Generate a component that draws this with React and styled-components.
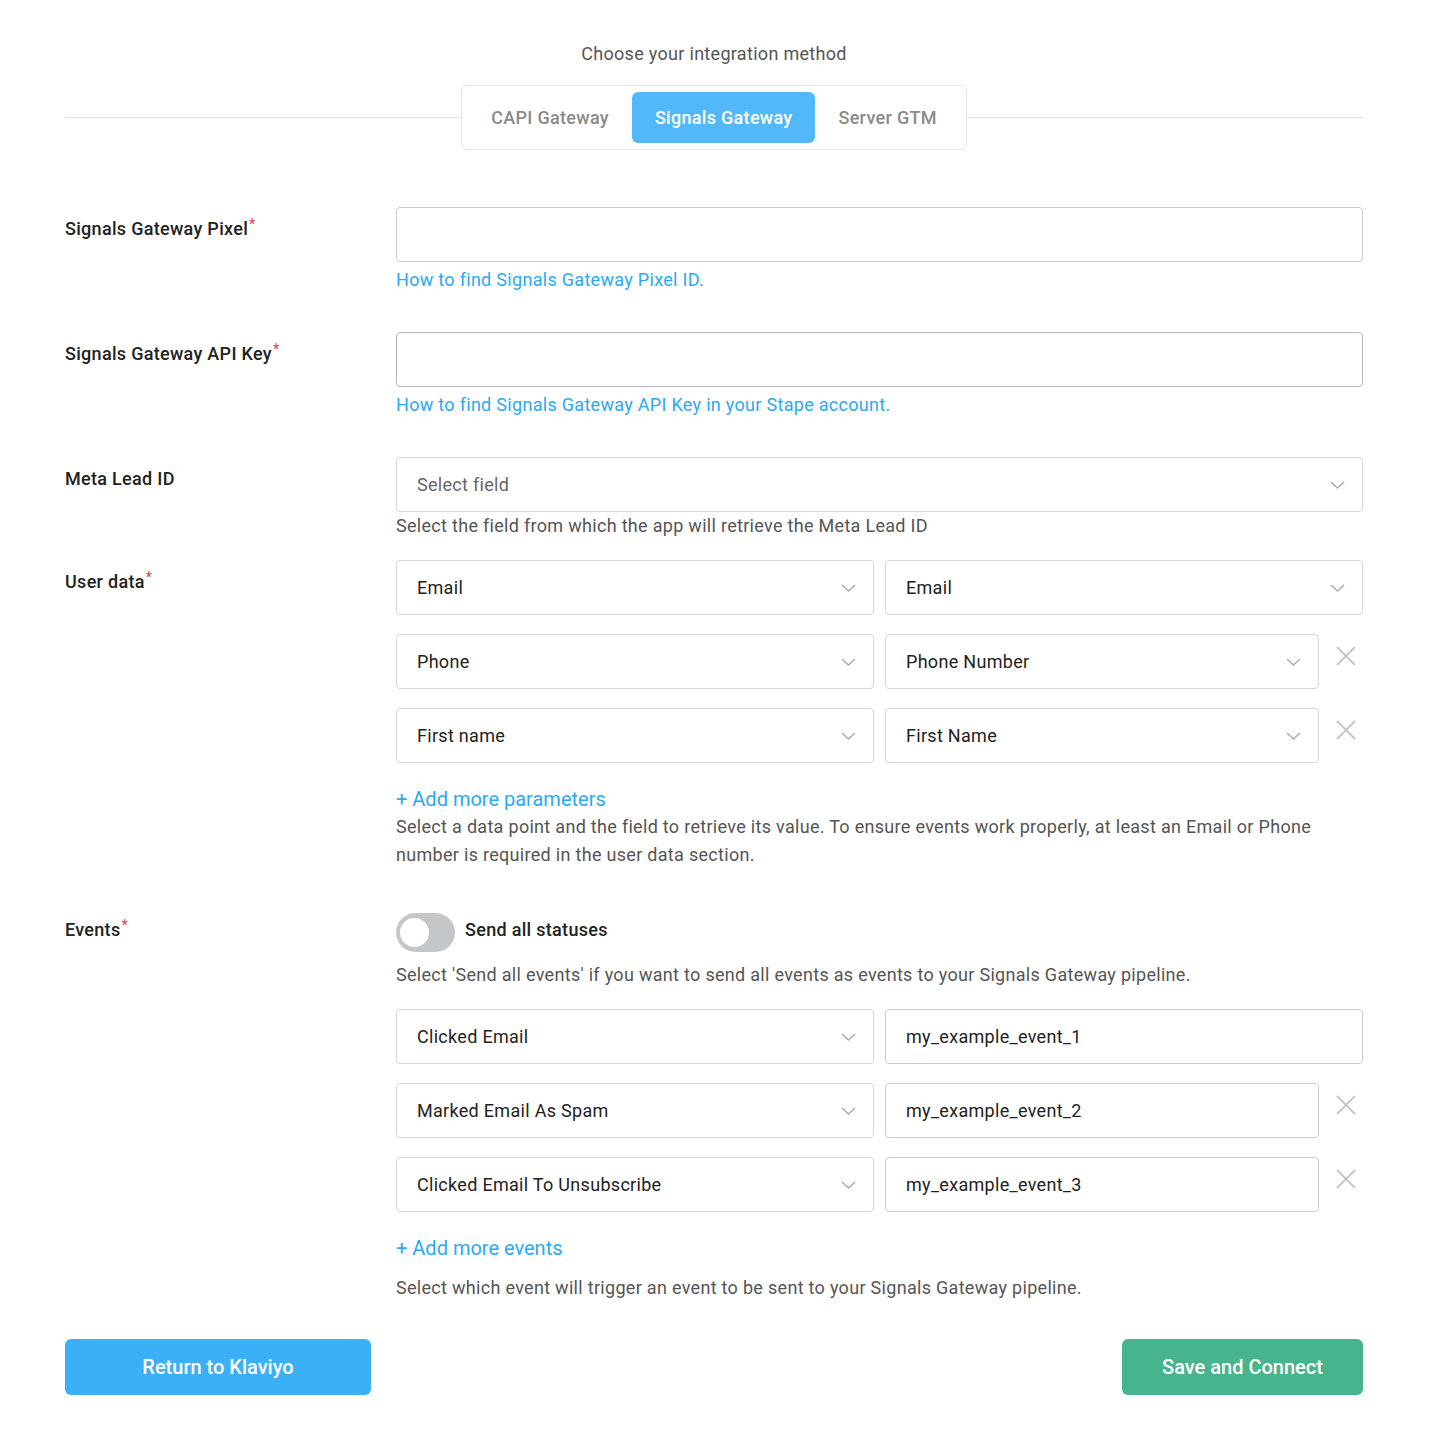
import styled, { createGlobalStyle } from "styled-components";

const GlobalStyle = createGlobalStyle`
  body {
    margin: 0;
    background: #fff;
    font-family: Roboto, "Liberation Sans", Arial, sans-serif;
    color: #222;
    letter-spacing: 0.3px;
  }
  * { box-sizing: border-box; }
`;

const Page = styled.div`
  padding: 41px 77px 37px 65px;
  width: 1440px;
`;

const Title = styled.div`
  text-align: center;
  font-size: 18px;
  line-height: 26px;
  color: #555;
`;

const TabsLine = styled.div`
  display: flex;
  align-items: center;
  margin-top: 18px;

  &::before,
  &::after {
    content: "";
    flex: 1;
    height: 1px;
    background: #e3e3e3;
  }
`;

const Tabs = styled.div`
  display: flex;
  padding: 6px;
  border: 1px solid #e6e6e6;
  border-radius: 6px;
  background: #fff;
`;

const Tab = styled.button`
  border: 0;
  height: 51px;
  padding: 0 23px;
  border-radius: 6px;
  font-family: inherit;
  letter-spacing: inherit;
  font-size: 18px;
  font-weight: 500;
  cursor: pointer;
  background: ${({ $active }) => ($active ? "#52b8f8" : "transparent")};
  color: ${({ $active }) => ($active ? "#fff" : "#8a8a8a")};
`;

const Form = styled.div`
  margin-top: 57px;
`;

const Row = styled.div`
  display: grid;
  grid-template-columns: 331px 1fr;
  margin-bottom: ${({ $mb }) => $mb}px;
`;

const Label = styled.div`
  font-size: 18px;
  font-weight: 500;
  line-height: 24px;
  color: #222;
  padding-top: ${({ $pt }) => $pt ?? 9}px;

  sup {
    color: #e5475a;
    font-size: 14px;
    line-height: 0;
    vertical-align: 6px;
    margin-left: 1px;
  }
`;

const Field = styled.div`
  display: flex;
  flex-direction: column;
`;

const Input = styled.div`
  height: 55px;
  border: 1px solid ${({ $dark }) => ($dark ? "#b8b8b8" : "#ccc")};
  border-radius: 4px;
  display: flex;
  align-items: center;
  padding: 0 20px;
  font-size: 18px;
  color: #222;
  background: #fff;
  min-width: 0;
`;

const SelectBox = styled(Input)`
  border-color: #d6d6d6;
  justify-content: space-between;
  color: ${({ $placeholder }) => ($placeholder ? "#666" : "#222")};
  padding-right: 17px;
`;

const HelpLink = styled.a`
  font-size: 18px;
  line-height: 26px;
  margin-top: 5px;
  color: #2aa9f4;
  text-decoration: none;
  cursor: pointer;
`;

const AddLink = styled(HelpLink)`
  font-size: 20px;
  line-height: 28px;
  letter-spacing: 0;
  margin-top: 22px;
`;

const Hint = styled.div`
  font-size: 18px;
  line-height: 28px;
  color: #555;
  margin-top: ${({ $mt }) => $mt ?? 0}px;
`;

const Pair = styled.div`
  display: grid;
  grid-template-columns: 1fr 1fr;
  gap: 11px;
  margin-top: ${({ $mt }) => $mt ?? 0}px;
`;

const Cell = styled.div`
  display: flex;
  min-width: 0;

  & > div {
    flex: 1;
  }
`;

const RemoveButton = styled.button`
  width: 44px;
  flex: 0 0 44px;
  border: 0;
  background: transparent;
  padding: 12px 7px 0 0;
  display: flex;
  justify-content: flex-end;
  align-items: flex-start;
  cursor: pointer;
`;

const ToggleRow = styled.div`
  display: flex;
  align-items: center;
  gap: 10px;
  padding-top: 1px;
`;

const Toggle = styled.div`
  width: 59px;
  height: 39px;
  border-radius: 20px;
  background: #c4c7ca;
  position: relative;

  &::after {
    content: "";
    position: absolute;
    left: 4px;
    top: 5px;
    width: 29px;
    height: 29px;
    border-radius: 50%;
    background: #fff;
  }
`;

const ToggleLabel = styled.span`
  font-size: 18px;
  font-weight: 500;
  color: #222;
  padding-bottom: 6px;
`;

const Footer = styled.div`
  display: flex;
  justify-content: space-between;
  margin-top: 37px;
`;

const Button = styled.button`
  height: 56px;
  width: ${({ $w }) => $w}px;
  border: 0;
  border-radius: 6px;
  background: ${({ $green }) => ($green ? "#46b48c" : "#3bb0f7")};
  color: #fff;
  font-family: inherit;
  letter-spacing: 0;
  font-size: 20px;
  font-weight: 500;
  cursor: pointer;
`;

const Chevron = () => (
  <svg width="15" height="8" viewBox="0 0 15 8" fill="none">
    <path d="M1 1l6.5 6 6.5-6" stroke="#a8a8a8" strokeWidth="1.4" />
  </svg>
);

const Cross = () => (
  <svg width="20" height="20" viewBox="0 0 20 20" fill="none">
    <path d="M1 1l18 18M19 1L1 19" stroke="#c6c6c6" strokeWidth="2" />
  </svg>
);

const Select = ({ children, placeholder }) => (
  <SelectBox $placeholder={placeholder}>
    <span>{children}</span>
    <Chevron />
  </SelectBox>
);

const userData = [
  ["Email", "Email"],
  ["Phone", "Phone Number"],
  ["First name", "First Name"],
];

const events = [
  ["Clicked Email", "my_example_event_1"],
  ["Marked Email As Spam", "my_example_event_2"],
  ["Clicked Email To Unsubscribe", "my_example_event_3"],
];

export default function App() {
  return (
    <>
      <GlobalStyle />
      <Page>
        <Title>Choose your integration method</Title>
        <TabsLine>
          <Tabs>
            <Tab>CAPI Gateway</Tab>
            <Tab $active>Signals Gateway</Tab>
            <Tab>Server GTM</Tab>
          </Tabs>
        </TabsLine>

        <Form>
          <Row $mb={39}>
            <Label $pt={10}>
              Signals Gateway Pixel<sup>*</sup>
            </Label>
            <Field>
              <Input />
              <HelpLink>How to find Signals Gateway Pixel ID.</HelpLink>
            </Field>
          </Row>

          <Row $mb={39}>
            <Label $pt={10}>
              Signals Gateway API Key<sup>*</sup>
            </Label>
            <Field>
              <Input $dark />
              <HelpLink>How to find Signals Gateway API Key in your Stape account.</HelpLink>
            </Field>
          </Row>

          <Row $mb={20}>
            <Label $pt={10}>Meta Lead ID</Label>
            <Field>
              <Select placeholder>Select field</Select>
              <Hint>Select the field from which the app will retrieve the Meta Lead ID</Hint>
            </Field>
          </Row>

          <Row $mb={43}>
            <Label $pt={10}>
              User data<sup>*</sup>
            </Label>
            <Field>
              {userData.map(([a, b], i) => (
                <Pair key={a} $mt={i ? 19 : 0}>
                  <Select>{a}</Select>
                  <Cell>
                    <Select>{b}</Select>
                    {i > 0 && (
                      <RemoveButton aria-label="Remove">
                        <Cross />
                      </RemoveButton>
                    )}
                  </Cell>
                </Pair>
              ))}
              <AddLink>+ Add more parameters</AddLink>
              <Hint>
                Select a data point and the field to retrieve its value. To ensure events work properly, at least
                an Email or Phone number is required in the user data section.
              </Hint>
            </Field>
          </Row>

          <Row $mb={0}>
            <Label $pt={6}>
              Events<sup>*</sup>
            </Label>
            <Field>
              <ToggleRow>
                <Toggle />
                <ToggleLabel>Send all statuses</ToggleLabel>
              </ToggleRow>
              <Hint $mt={9}>
                Select 'Send all events' if you want to send all events as events to your Signals Gateway pipeline.
              </Hint>
              {events.map(([a, b], i) => (
                <Pair key={a} $mt={i ? 19 : 20}>
                  <Select>{a}</Select>
                  <Cell>
                    <Input>{b}</Input>
                    {i > 0 && (
                      <RemoveButton aria-label="Remove">
                        <Cross />
                      </RemoveButton>
                    )}
                  </Cell>
                </Pair>
              ))}
              <AddLink>+ Add more events</AddLink>
              <Hint $mt={12}>Select which event will trigger an event to be sent to your Signals Gateway pipeline.</Hint>
            </Field>
          </Row>
        </Form>

        <Footer>
          <Button $w={306}>Return to Klaviyo</Button>
          <Button $w={241} $green>
            Save and Connect
          </Button>
        </Footer>
      </Page>
    </>
  );
}
